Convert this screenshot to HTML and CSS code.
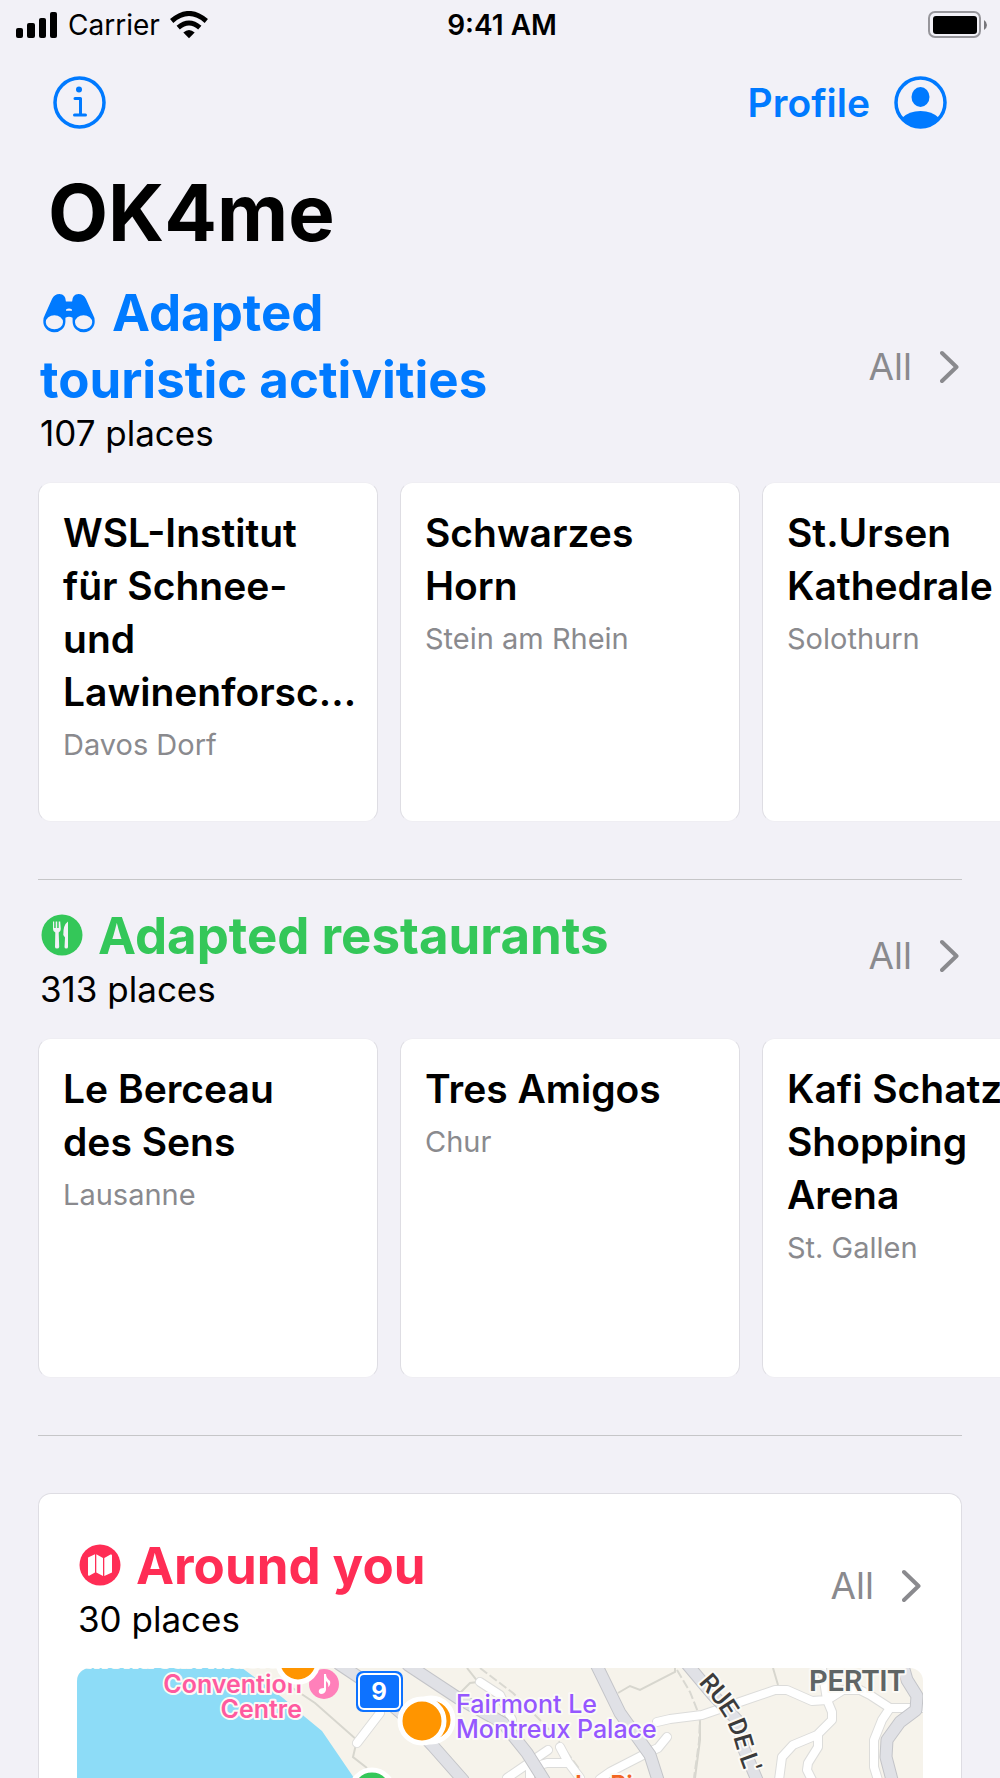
FILE: index.html
```html
<!DOCTYPE html>
<html lang="en">
<head>
<meta charset="utf-8">
<meta name="viewport" content="width=device-width, initial-scale=1">
<title>OK4me</title>
<link rel="stylesheet" href="styles.css">
</head>
<body>
<div class="screen">
  <div class="status">
    <div class="status-left">
      <svg width="42" height="26" viewBox="0 0 42 26" aria-hidden="true"><rect x="0" y="16" width="7" height="10" rx="2"/><rect x="11" y="11" width="8" height="15" rx="2"/><rect x="23" y="6" width="7" height="20" rx="2"/><rect x="34" y="0" width="7" height="26" rx="2"/></svg>
      <span>Carrier</span>
      <svg width="38" height="28" viewBox="0 0 38 28" aria-hidden="true"><path d="M19 27.300L13.300 21.600Q19 16.600 24.700 21.600Z"/><path fill="none" stroke="#000" stroke-width="5" d="M8.200 16.600Q19 7.400 29.800 16.600M1.700 10Q19 -5 36.300 10"/></svg>
    </div>
    <span class="clock">9:41 AM</span>
    <svg class="battery" width="60" height="28" viewBox="0 0 60 28" aria-hidden="true"><rect x="1" y="1" width="51" height="25" rx="6" fill="none" stroke="#97969b" stroke-width="2"/><rect x="5" y="5" width="44" height="18" rx="3"/><path fill="#77767b" d="M56 9Q59 11 59 14Q59 17 56 19Z"/></svg>
  </div>

  <nav class="nav">
    <button class="nav-button" type="button" aria-label="Information">
      <svg width="53" height="53" viewBox="0 0 53 53" fill="none" stroke="#007aff" stroke-linecap="round" stroke-linejoin="round" stroke-width="3" aria-hidden="true"><circle cx="26.500" cy="26.500" r="24.500" stroke-width="3.500"/><path d="M22 22.500H27.500V39M21.500 39H32.500"/><circle cx="26" cy="13.500" r="3" fill="#007aff" stroke="none"/></svg>
    </button>
    <button class="nav-button" type="button">
      <span>Profile</span>
      <svg width="53" height="53" viewBox="0 0 53 53" aria-hidden="true"><circle cx="26.500" cy="26.500" r="24.500" fill="none" stroke="#007aff" stroke-width="3.500"/><ellipse cx="26.500" cy="21" rx="9" ry="10" fill="#007aff"/><path fill="#007aff" d="M8 42Q15 35 26.500 35Q38 35 45 42Q37 51.500 26.500 51.500Q16 51.500 8 42Z"/></svg>
    </button>
  </nav>

  <h1 class="title">OK4me</h1>

  <main class="content">
    <section class="section">
      <header class="head">
        <div>
          <h2 class="heading blue"><svg class="icon" width="56" height="40" viewBox="0 0 56 40" aria-hidden="true"><path fill="currentColor" fill-rule="evenodd" d="M5.300 21L12 6Q14.500 1 19.500 1Q25.600 1 25.900 8.500H32.100Q32.400 1 38.500 1Q43.500 1 46 6L52.700 21Q54.700 24.500 54.700 28A11 10.800 0 0 1 32.600 29V24.800Q29 22.500 25.400 24.800V29A11 10.800 0 0 1 3.300 28Q3.300 24.500 5.300 21ZM26 16.600V17.700H32V16.600Q29 14.500 26 16.600ZM5.800 29.300A8.600 7 0 0 0 23 29.300A8.600 7 0 0 0 5.800 29.300ZM35 29.300A8.600 7 0 0 0 52.200 29.300A8.600 7 0 0 0 35 29.300Z"/></svg>Adapted<br>touristic activities</h2>
          <p class="count">107 places</p>
        </div>
        <a class="all" href="#activities">All <svg width="20" height="34" viewBox="0 0 20 34" aria-hidden="true"><path d="M2 3L16.500 17L2 31"/></svg></a>
      </header>
      <div class="track">
        <article class="card"><h3>WSL-Institut<br>für Schnee-<br>und<br>Lawinenforsc...</h3><p>Davos Dorf</p></article>
        <article class="card"><h3>Schwarzes<br>Horn</h3><p>Stein am Rhein</p></article>
        <article class="card"><h3>St.Ursen<br>Kathedrale</h3><p>Solothurn</p></article>
      </div>
    </section>

    <hr class="rule">

    <section class="section spaced">
      <header class="head">
        <div>
          <h2 class="heading green"><svg class="icon round" width="42" height="42" viewBox="0 0 42 42" aria-hidden="true"><circle cx="21" cy="21" r="20.500" fill="currentColor"/><path fill="#f2f1f7" d="M12 7.500H13.200V14H14.700V7.500H16.200V14H17.700V7.500H19.200L19.800 15Q19.800 17.500 17.700 18.500L18.200 33Q18 34.500 16 34.500Q14 34.500 14 33L14.300 18.500Q12 17.500 12 15ZM27 7.500V33Q27 34.500 25.300 34.500Q23.500 34.500 23.500 33L24 23.500L22.300 21Q22 11 27 7.500Z"/></svg>Adapted restaurants</h2>
          <p class="count">313 places</p>
        </div>
        <a class="all" href="#restaurants">All <svg width="20" height="34" viewBox="0 0 20 34" aria-hidden="true"><path d="M2 3L16.500 17L2 31"/></svg></a>
      </header>
      <div class="track">
        <article class="card"><h3>Le Berceau<br>des Sens</h3><p>Lausanne</p></article>
        <article class="card"><h3>Tres Amigos</h3><p>Chur</p></article>
        <article class="card"><h3>Kafi Schatz<br>Shopping<br>Arena</h3><p>St. Gallen</p></article>
      </div>
    </section>

    <hr class="rule">

    <section class="around">
      <header class="head">
        <div>
          <h2 class="heading pink"><svg class="icon round" width="42" height="42" viewBox="0 0 42 42" aria-hidden="true"><circle cx="21" cy="21" r="20.500" fill="currentColor"/><path fill="#fff" d="M9 13.500L16 10.200V28.500L10.200 31.700Q9 32 9 30.800ZM17.300 10.200L24 14V32L17.300 28.500ZM25.300 14L31.500 10.500Q33 10 33 11.500V28.500L25.300 32Z"/></svg>Around you</h2>
          <p class="count">30 places</p>
        </div>
        <a class="all" href="#around">All <svg width="20" height="34" viewBox="0 0 20 34" aria-hidden="true"><path d="M2 3L16.500 17L2 31"/></svg></a>
      </header>
      <div class="map">
        <svg class="map-art" viewBox="0 0 846 110" role="img" aria-label="Map of Montreux">
          <defs>
            <path id="street" d="M628 9L646 30L657 47L665 67L670 84L685 125"/>
            <g id="lanes">
              <path d="M280 75L303 45M403 14L423 27L435 52M471 82L430 110M483 79L491 94L503 110M453 112V100L470 95L491 95M590 69L581 80L570 85L533 104L523 111"/>
              <path d="M580 54L593 51L625 47L660 35L698 22H710L735 33L750 32L766 22H783L793 27L813 40H846M745 0L750 32L755 44V52L740 67L716 77L705 89L702 112M741 67V79L731 95L730 102L735 112M813 40L805 52L797 72V99L801 112"/>
            </g>
            <g id="avenues">
              <path d="M262 -4L283 10L330 50L356 78L386 112M331 -3L381 30L426 55L450 85L467 112M519 -4L543 45L573 87L581 112M610 -4L636 27L660 52L666 79L680 112M826 -2L830 12L840 28L839 42L823 54L810 72L809 89L815 112"/>
            </g>
          </defs>
          <rect width="846" height="110" fill="#f6f3eb"/>
          <path fill="#8ddcf7" d="M0 0H165L206 30L228 49L245 63L260 85L275 107L277 110H0Z"/>
          <path class="trail" d="M203 11L211 17L238 35L280 72L276 89L290 100M383 25L393 15L401 14L390 0M541 25L553 18L563 22L598 4V0M696 0L701 17M623 49V72L618 110"/>
          <path class="rail" d="M403 0L436 25L468 57L483 75L503 102M600 2L613 24L623 49L622 74L617 110"/>
          <use href="#lanes" class="lane-edge"/>
          <use href="#lanes" class="lane"/>
          <use href="#avenues" class="avenue-edge"/>
          <use href="#avenues" class="avenue"/>
          <text class="label place-pink" x="8" y="-1">Montreux Music &amp;</text>
          <text class="label place-pink end" x="225" y="25">Convention</text>
          <text class="label place-pink end" x="225" y="50">Centre</text>
          <circle cx="247" cy="16" r="15" fill="#ff80ba"/>
          <path fill="#fff" d="M247 6H249Q249 10 253 13Q254 17 251 19Q252 15 249 13V22Q248 26 244 26Q241 25 242 22Q243 20 247 20Z"/>
          <rect x="279" y="3" width="47" height="41" rx="7" fill="#0d72ff"/>
          <rect x="282" y="6" width="41" height="35" rx="5" fill="none" stroke="#fff" stroke-width="2"/>
          <text class="shield" x="302" y="32">9</text>
          <circle class="pin" cx="221" cy="-6" r="20"/>
          <circle class="pin" cx="354" cy="52" r="22"/>
          <circle class="pin" cx="345" cy="53" r="22"/>
          <circle class="pin pin-green" cx="295" cy="123" r="21"/>
          <text class="label hotel" x="379" y="45">Fairmont Le</text>
          <text class="label hotel" x="379" y="70">Montreux Palace</text>
          <text class="label food" x="498" y="126">Le Pi</text>
          <text class="label street"><textPath href="#street">RUE DE L'</textPath></text>
          <text class="label district" x="732" y="23">PERTIT</text>
        </svg>
      </div>
    </section>
  </main>
</div>
</body>
</html>
```

FILE: styles.css
```css
* { box-sizing: border-box; }

body {
  margin: 0;
  background: #f2f1f7;
  color: #000;
  font-family: Inter, "Liberation Sans", sans-serif;
}

h1, h2, h3, p { margin: 0; }
svg { flex: none; }

.screen {
  height: 100vh;
  display: flex;
  flex-direction: column;
  overflow: hidden;
}

.status {
  display: grid;
  grid-template-columns: 1fr auto 1fr;
  align-items: center;
  height: 50px;
  padding: 0 12px 0 16px;
  font-size: 28px;
  line-height: 32px;
}
.status-left { display: flex; align-items: center; gap: 10px; }
.clock { font-weight: 600; }
.battery { justify-self: end; }

.nav {
  display: flex;
  justify-content: space-between;
  padding: 26px 53px 0;
}
.nav-button {
  display: flex;
  align-items: center;
  gap: 24px;
  padding: 0;
  border: 0;
  background: none;
  color: #007aff;
  font: 600 39px/53px Inter, "Liberation Sans", sans-serif;
}

.title {
  padding: 36px 48px 18px;
  font-size: 78px;
  line-height: 96px;
  font-weight: 700;
}

.content {
  flex: 1;
  min-height: 0;
  display: flex;
  flex-direction: column;
}

.section { flex: none; }
.spaced { padding-top: 22px; }

.head {
  display: flex;
  justify-content: space-between;
  align-items: center;
  padding: 0 40px;
}
.heading {
  font-size: 51px;
  line-height: 67px;
  font-weight: 700;
}
.icon { margin-right: 16px; vertical-align: -2px; }
.round { margin: 0 15px 0 1px; }
.blue { color: #007aff; }
.green { color: #34c759; }
.pink { color: #ff2d55; }
.count { font-size: 35px; line-height: 41px; }

.all {
  display: flex;
  align-items: center;
  gap: 28px;
  color: #8a8a8e;
  font-size: 37px;
  line-height: 46px;
  text-decoration: none;
}
.all path {
  fill: none;
  stroke: #8a8a8e;
  stroke-width: 4;
  stroke-linecap: round;
  stroke-linejoin: round;
}

.track {
  display: flex;
  gap: 22px;
  padding: 28px 0 0 38px;
  overflow: hidden;
}
.card {
  flex: none;
  width: 340px;
  height: 340px;
  padding: 23px 0 0 24px;
  border: 1px solid #dedde3;
  border-top-color: #efeef3;
  border-bottom-color: #efeef3;
  border-radius: 13px;
  background: #fff;
}
.card h3 {
  font-size: 39px;
  line-height: 53px;
  font-weight: 600;
  white-space: nowrap;
}
.card p {
  color: #8a8a8e;
  font-size: 29px;
  line-height: 53px;
}

.rule {
  flex: none;
  width: auto;
  height: 1px;
  margin: 57px 38px 0;
  border: 0;
  background: #c6c6c8;
}

.around {
  flex: 1;
  min-height: 0;
  margin: 57px 38px 0;
  padding-top: 38px;
  border: 1px solid #dedde3;
  border-bottom: 0;
  border-radius: 13px 13px 0 0;
  background: #fff;
  overflow: hidden;
}
.around .head { padding: 0 39px; }
.map {
  margin: 28px 38px 0;
  border-radius: 13px 13px 0 0;
  overflow: hidden;
}
.map-art { display: block; width: 100%; }

.trail { fill: none; stroke: #d7d6ce; stroke-width: 2; }
.rail { fill: none; stroke: #d9d8d1; stroke-width: 2; stroke-dasharray: 9 3; }
.lane-edge, .lane, .avenue-edge, .avenue {
  fill: none;
  stroke-linecap: round;
  stroke-linejoin: round;
}
.lane-edge { stroke: #dcdcda; stroke-width: 10; }
.lane { stroke: #fff; stroke-width: 8; }
.avenue-edge { stroke: #c3c4c8; stroke-width: 13; }
.avenue { stroke: #e0e1e6; stroke-width: 11; }

.label {
  font-size: 25px;
  paint-order: stroke;
  stroke: #fbfaf6;
  stroke-width: 4;
  stroke-linejoin: round;
}
.end { text-anchor: end; }
.place-pink { fill: #ff5a9f; font-weight: 600; }
.hotel { fill: #9557ff; font-weight: 500; }
.food { fill: #f26522; font-weight: 600; }
.district { fill: #5f6565; font: 600 29px Roboto, sans-serif; }
.street { fill: #3b3b3b; font: 500 25px Roboto, sans-serif; dominant-baseline: central; }
.shield { fill: #fff; font-size: 24px; font-weight: 700; text-anchor: middle; }
.pin { fill: #ff9500; stroke: #fff; stroke-width: 5; }
.pin-green { fill: #34c759; }
```
